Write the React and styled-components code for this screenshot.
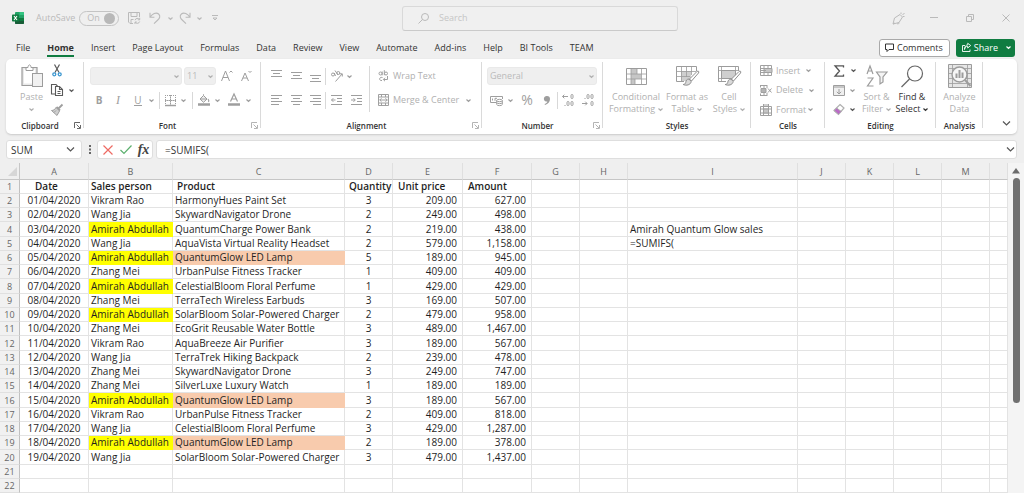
import React, { useState } from 'react';
import styled, { createGlobalStyle, css } from 'styled-components';

const GlobalStyle = createGlobalStyle`
    * {
        box-sizing: border-box;
    }

    body {
        margin: 0;
        background: #efefef;
        color: #333;
        font-family: "Open Sans", "Noto Sans", sans-serif;
        font-size: 9px;
        line-height: 12px;
    }

    button, input, select {
        margin: 0;
        padding: 0;
        border: 0;
        background: none;
        color: inherit;
        font: inherit;
    }
`

const Page = styled.div`
    display: flex;
    flex-direction: column;
    min-height: 100vh;
`

const Svg = styled.svg`
    display: block;
    flex: none;
    fill: none;
    stroke: currentColor;
    stroke-width: 1;
    overflow: visible;
`

const Solid = styled(Svg)`
    fill: currentColor;
    stroke: none;
`

/* ---- title bar ---- */

const TitleBar = styled.header`
    display: grid;
    grid-template-columns: minmax(0, 1fr) 276px 346px;
    align-items: center;
    height: 36px;
    color: #bababa;
`

const QuickAccess = styled.div`
    display: flex;
    align-items: center;
    padding-left: 12px;
`

const AutoSave = styled.label`
    display: flex;
    align-items: center;
    gap: 4px;
    margin: 0 7px 0 12px;
`

const Toggle = styled.span`
    display: flex;
    align-items: center;
    justify-content: space-between;
    width: 40px;
    height: 15px;
    padding: 0 3px 0 7px;
    border: 1px solid #c4c4c4;
    border-radius: 8px;
`

const ToggleInput = styled.input`
    appearance: none;
    width: 11px;
    height: 11px;
    border-radius: 50%;
    background: #b8b8b8;
`

const IconButton = styled.button`
    display: flex;
    align-items: center;
    justify-content: center;
    flex: none;
    width: ${props => props.$w || 14}px;
    height: 18px;
    color: ${props => props.$color || 'inherit'};
`

const Search = styled.label`
    display: flex;
    align-items: center;
    gap: 10px;
    height: 25px;
    padding: 0 15px;
    border: 1px solid #d9d9d9;
    border-bottom-color: #cacaca;
    border-radius: 3px;
    background: #f0f0f0;
`

const SearchInput = styled.input`
    flex: 1;
    min-width: 0;
    outline: none;

    &::placeholder {
        color: #c6c6c6;
        opacity: 1;
    }
`

const WindowButtons = styled.div`
    display: flex;
    justify-content: flex-end;
    gap: 22px;
    padding-right: 11px;
`

/* ---- tabs ---- */

const TabBar = styled.nav`
    display: flex;
    align-items: center;
    gap: 6px;
    height: 23px;
    padding: 0 9px 0 16px;
`

const Tabs = styled.div`
    display: flex;
    gap: 17px;
    flex: 1;
`

const Tab = styled.button`
    height: 18px;
    padding-top: 3px;
    white-space: nowrap;
    border-bottom: 2px solid ${props => props.$active ? '#107c41' : 'transparent'};
    font-weight: ${props => props.$active ? 700 : 400};
    color: #333;
`

const CommentsButton = styled.button`
    display: flex;
    align-items: center;
    gap: 3px;
    height: 18px;
    padding: 0 6px 0 5px;
    border: 1px solid #a9a9a9;
    border-radius: 3px;
    background: #fff;
`

const ShareSplit = styled.div`
    display: flex;
    align-items: center;
    gap: 5px;
    height: 18px;
    padding: 0 2px 0 6px;
    border-radius: 3px;
    background: #107c41;
    color: #fff;
`

const ShareButton = styled.button`
    display: flex;
    align-items: center;
    gap: 3px;
`

/* ---- ribbon ---- */

const Ribbon = styled.section`
    display: flex;
    height: 75px;
    margin: 0 7px 0 6px;
    border-radius: 5px;
    background: #fff;
    box-shadow: 0 1px 2px #c9c9c9;
    color: #b0b0b0;
`

const GroupBox = styled.div`
    display: flex;
    flex-direction: column;
    flex: none;
    width: ${props => props.$w}px;
    padding: 2px 0;
    background: linear-gradient(#dadada, #dadada) right 3px / 1px 66px no-repeat;
`

const GroupBody = styled.div`
    display: flex;
    flex: 1;
    padding-left: ${props => props.$pad || 0}px;
`

const GroupFooter = styled.div`
    display: flex;
    align-items: center;
    height: 13px;
    font-size: 8px;
    font-weight: 600;
    color: #333;
`

const GroupName = styled.span`
    flex: 1;
    text-align: center;
`

const Launcher = styled.button`
    display: flex;
    width: 10px;
    color: ${props => props.$dark ? '#666' : '#b4b4b4'};
`

const BigButton = styled.button`
    display: flex;
    flex-direction: column;
    align-items: center;
    justify-content: flex-start;
    gap: 3px;
    flex: none;
    width: ${props => props.$w}px;
    padding-top: 3px;
    white-space: nowrap;
    color: ${props => props.$dark ? '#333' : '#b0b0b0'};
`

const BigIcon = styled.span`
    display: flex;
    align-items: center;
    height: 24px;
    color: ${props => props.$dark ? '#666' : '#9c9c9c'};
`

const ButtonLine = styled.span`
    display: flex;
    align-items: center;
    justify-content: center;
    gap: 3px;
    min-height: 12px;
`

const Stack = styled.div`
    display: flex;
    flex-direction: column;
    padding-top: ${props => props.$top || 0}px;
`

const Row = styled.div`
    display: flex;
    align-items: center;
    height: ${props => props.$h || 24}px;
`

const TextButton = styled.button`
    display: flex;
    align-items: center;
    gap: 4px;
    white-space: nowrap;

    svg {
        color: #a0a0a0;
    }
`

const Rule = styled.span`
    flex: none;
    width: 1px;
    height: ${props => props.$h || 17}px;
    background: #d8d8d8;
    margin: ${props => props.$m || '0'};
`

const Picker = styled.label`
    position: relative;
    display: block;
    width: ${props => props.$w}px;
    height: 18px;
    margin-right: 2px;
`

const PickerSelect = styled.select`
    appearance: none;
    width: 100%;
    height: 100%;
    padding: 0 2px;
    border: 1px solid #e9e9e9;
    border-radius: 3px;
    background: #efefef;
    color: #bababa;
    opacity: 1;
`

const PickerArrow = styled.span`
    position: absolute;
    top: 8px;
    right: 3px;
    pointer-events: none;
`

const Letter = styled.span`
    font-size: ${props => props.$size || 10}px;
    ${props => props.$bold && css`font-weight: 700;`}
    ${props => props.$italic && css`font-family: "Liberation Serif", serif; font-style: italic;`}
    ${props => props.$underline && css`border-bottom: 1px solid currentColor; line-height: 10px;`}
`

const RibbonEnd = styled.div`
    display: flex;
    flex: 1;
    align-items: flex-end;
    justify-content: flex-end;
    padding: 0 6px 2px 0;
    color: #555;
`

/* ---- formula bar ---- */

const FormulaBar = styled.section`
    display: flex;
    margin: 6px 7px 4px 6px;
    height: 19px;
    font-size: 10px;
`

const FieldBox = styled.div`
    display: flex;
    align-items: center;
    border: 1px solid #dedede;
    border-radius: 3px;
    background: #fff;
    padding: 0 ${props => props.$pad || 4}px;
    ${props => props.$w ? css`width: ${props.$w}px;` : css`flex: 1;`}
`

const FormulaBox = styled(FieldBox)`
    margin-left: 3px;
    padding: 0 1px 0 8px;
    color: #555;
`

const FieldInput = styled.input`
    flex: 1;
    min-width: 0;
    color: #333;
    outline: none;
`

const Dots = styled.span`
    display: flex;
    align-items: center;
    justify-content: center;
    width: 15px;
    color: #666;
`

const Fx = styled.span`
    font: italic bold 14px "Liberation Serif", serif;
    color: #444;
`

/* ---- sheet ---- */

const Sheet = styled.main`
    display: flex;
    flex: 1;
`

const Grid = styled.table`
    flex: 1;
    width: 0;
    align-self: flex-start;
    table-layout: fixed;
    border-collapse: separate;
    border-spacing: 0;
    font-size: 10px;
    line-height: 13px;
    background: #fff;
    color: #1f1f1f;

    tbody tr {
        height: 14px;
    }

    tbody tr:nth-child(4n) {
        height: 15px;
    }
`

const ColHead = styled.th`
    height: 17px;
    padding: 0;
    border-right: 1px solid #dfdfdf;
    border-bottom: 1px solid #c6c6c6;
    background: #efefef;
    color: #666;
    font-size: 9px;
    font-weight: 400;
`

const Corner = styled(ColHead)`
    border-right-color: #c6c6c6;
    color: #d6d6d6;
`

const RowHead = styled.th`
    padding: 0;
    border-right: 1px solid #c0c0c0;
    border-bottom: 1px solid #e0e0e0;
    background: #f1f1f1;
    color: #666;
    font-size: 9px;
    font-weight: 400;
`

const Cell = styled.td`
    height: 14px;
    padding: 0 ${props => props.$align === 'right' ? 5 : 0}px 0 ${props => props.$indent || 0}px;
    border-right: 1px solid ${props => props.$fill || '#e3e3e3'};
    border-bottom: 1px solid ${props => props.$fill || '#e3e3e3'};
    background: ${props => props.$fill || '#fff'};
    text-align: ${props => props.$align || 'left'};
    font-weight: ${props => props.$bold ? 600 : 400};
    white-space: nowrap;
`

const ScrollTrack = styled.div`
    display: flex;
    flex-direction: column;
    align-items: center;
    width: 16px;
    padding-top: 5px;
    background: #f4f4f4;
    color: #6c6c6c;
`

const ScrollThumb = styled.div`
    flex: 5;
    width: 7px;
    margin-top: 4px;
    border-radius: 4px;
    background: #707070;
`

const ScrollRest = styled.div`
    flex: 2;
`

/* ---- icons ---- */

const Icon = ({ w = 12, h = 12, solid, children, ...rest }) => {
    const Base = solid ? Solid : Svg
    return <Base width={w} height={h} viewBox={`0 0 ${w} ${h}`} aria-hidden="true" {...rest}>{children}</Base>
}

const Chevron = () => <Icon w={5} h={3}><path d="M.5.5l2 2 2-2" strokeWidth="1.2" /></Icon>
const WideChevron = () => <Icon w={9} h={5}><path d="M1 .5L4.5 4 8 .5" strokeWidth="1.2" /></Icon>

const ExcelLogo = () => (
    <Icon solid>
        <rect x="3" y="0" width="9" height="12" rx="1" fill="#21a366" />
        <path d="M7.5 0H11a1 1 0 0 1 1 1v2H7.5z" fill="#33c481" />
        <path d="M3 6h9v5a1 1 0 0 1-1 1H4a1 1 0 0 1-1-1z" fill="#185c37" />
        <path d="M7.5 6H12v3H7.5z" fill="#107c41" />
        <rect x="0" y="2.5" width="7" height="7" rx=".8" fill="#107c41" />
        <path d="M2 4l3 4M5 4L2 8" stroke="#fff" strokeWidth="1.1" />
    </Icon>
)

const SaveIcon = () => (
    <Icon>
        <path d="M5 11.5H2L.5 10V.5h11V5M3 .5v4h6v-4M3 11V7.5h2.5M7 8.2a2.5 2.5 0 0 1 4.5-.7M11.7 5.8v2H9.8M11.7 9.5a2.5 2.5 0 0 1-4.5.7M7 12v-2h1.8" />
    </Icon>
)

const UndoIcon = () => <Icon><path d="M1 .8v4.4h4.4M1.2 5C3.3 2 7-.2 9.6 2c2.2 2 1 4.5-.8 6L5 11.7" strokeWidth="1.1" /></Icon>
const RedoIcon = () => <Icon><path d="M11 .8v4.4H6.6M10.8 5C8.7 2 5-.2 2.4 2c-2.2 2-1 4.5.8 6L7 11.7" strokeWidth="1.1" /></Icon>

const SearchIcon = () => (
    <Icon w={11} h={11}><circle cx="7" cy="4" r="3.5" /><path d="M4.5 6.5l-4 4" /></Icon>
)

const PenIcon = () => (
    <Icon w={13} h={13}><path d="M8 2.5L10.5 5 7 10.5 1 12l1.5-6zM1 12l2-1M9 2V.5M10.5 3l2-2M11 4.5h1.5M5 11.5c1 1 2.5 0 2-1" /></Icon>
)

const CommentIcon = () => (
    <Icon w={9} h={9}><path d="M.5 1h8v5.5H4l-2 2v-2H.5z" /></Icon>
)

const ShareIcon = () => (
    <Icon w={9} h={9}><path d="M3 2.5H.5v6H8v-2M2.5 6.5C3 4 4 3.3 5.7 3.2V5l3-2.5-3-2.2v1.5C4 2 2.5 3.5 2.5 6.5z" strokeWidth=".9" /></Icon>
)

const LauncherIcon = () => (
    <Icon w={7} h={7}><path d="M.5 6V.5H6M2.5 2.5L6 6M6.5 3v3.5H3" /></Icon>
)

const PasteIcon = () => (
    <Icon w={22} h={24}>
        <path d="M1 3.5h15v18H1z" fill="#e9e9e9" strokeWidth="1.2" />
        <path d="M3 5.5h11v14H3z" fill="#fff" stroke="none" />
        <path d="M5 6.5v-3h2c0-3.5 3-3.5 3 0h2v3z" fill="#fff" />
        <rect x="11.5" y="9.5" width="10" height="13" fill="#f1f1f1" />
    </Icon>
)

const CutIcon = () => (
    <Icon w={10} h={13}>
        <path d="M2.5.5L7 8.5M7.5.5L3 8.5" stroke="#5a5a5a" strokeWidth="1.2" />
        <circle cx="2.3" cy="10.3" r="1.5" stroke="#3a96d0" strokeWidth="1.3" />
        <circle cx="7.7" cy="10.3" r="1.5" stroke="#3a96d0" strokeWidth="1.3" />
    </Icon>
)

const CopyIcon = () => (
    <Icon>
        <path d="M4 10H.5V.5H5L6.5 2M4.5 2.5h4l3 3v6h-7zM8.5 2.5v3h3M6.5 7.5h3M6.5 9.5h3" strokeWidth="1.1" />
    </Icon>
)

const BrushIcon = () => (
    <Icon>
        <path d="M11.5.5l-4 4M5.5 3L9 6.5" strokeWidth="1.8" />
        <path d="M5 3.5L8.5 7 6 11.5l-5.5-5c2 0 3.5-1 4.5-3z" fill="#cfcfcf" />
        <path d="M3 8.5l2-2" />
    </Icon>
)

const BordersIcon = () => (
    <Icon w={11} h={11}>
        <path d="M.5 0v10M10.5 0v10M5.5 0v10M0 .5h11M0 5.5h11" strokeDasharray="1 1" />
        <path d="M0 10.5h11" strokeWidth="1.5" />
        <path d="M0 5.5h11M5.5 0v10" strokeWidth=".6" />
    </Icon>
)

const FillIcon = () => (
    <Icon>
        <path d="M5.5 1.5L9 5 5.5 8.3 2 5zM2.5 5h6M5.5 1.5V.3" fill="#eee" />
        <path d="M10 5c1 1.5 1 2.5.2 2.8" strokeWidth="1.2" />
        <path d="M0 10.5h12" strokeWidth="2.5" />
    </Icon>
)

const FontColorIcon = () => (
    <Icon>
        <path d="M2.5 7.5L6 0l3.5 7.5M4 5h4" strokeWidth="1.2" />
        <path d="M0 10.5h12" strokeWidth="2.5" />
    </Icon>
)

const Lines = ({ rows }) => (
    <Icon w={11} h={12}>
        {rows.map(([x1, x2, y]) => <path key={y} d={`M${x1} ${y}H${x2}`} />)}
    </Icon>
)

const top = [[0, 11, 0.5], [2, 9, 3.5], [0, 11, 6.5]]
const middle = [[0, 11, 2.5], [2, 9, 5.5], [0, 11, 8.5]]
const bottom = [[0, 11, 5.5], [2, 9, 8.5], [0, 11, 11.5]]
const left = [[0, 11, 1.5], [0, 8, 4.5], [0, 11, 7.5], [0, 8, 10.5]]
const center = [[0, 11, 1.5], [2, 9, 4.5], [0, 11, 7.5], [2, 9, 10.5]]
const right = [[0, 11, 1.5], [3, 11, 4.5], [0, 11, 7.5], [3, 11, 10.5]]

const OrientationIcon = () => (
    <Icon>
        <circle cx="2" cy="4.5" r="1.5" /><path d="M3.3 3l1.2 3M4 .5L7 5" />
        <circle cx="7.3" cy="3" r="1.5" />
        <path d="M4.5 11.5L11 4M8.5 3.8h2.8v2.7" />
    </Icon>
)

const IndentIcon = ({ flip }) => (
    <Icon w={11} h={12}>
        <path d="M0 1.5h11M6 4.5h5M6 7.5h5M0 10.5h11" />
        <path d={flip ? 'M0 6h4M2.5 4.2L4.3 6 2.5 7.8' : 'M.5 6h4M2.3 4.2L.5 6l1.8 1.8'} />
    </Icon>
)

const WrapIcon = () => (
    <Icon w={11} h={12}>
        <circle cx="2.5" cy="3.5" r="1.5" /><path d="M4.2 1.5v3.8M6.3.2v5" />
        <circle cx="8" cy="3.5" r="1.5" />
        <path d="M4.5 7.5c-3.5-1-4 3.5-.5 3M9.5 6v3.5h-4M7 7.8L5.3 9.5 7 11.2" />
    </Icon>
)

const MergeIcon = () => (
    <Icon w={11} h={12}>
        <path d="M.5.5h10v11H.5zM0 3h11M0 9h11M3.5 0v3M7.5 0v3M3.5 9v3M7.5 9v3M1.5 6h8M3.5 4.3L1.8 6l1.7 1.7M7.5 4.3L9.2 6 7.5 7.7" />
    </Icon>
)

const CurrencyIcon = () => (
    <Icon w={13} h={11}>
        <path d="M6 7.5H.5v-6h12V4M2.5 3.5v2M5 3.3h2M5 3.3v2.5" />
        <ellipse cx="9.5" cy="5.5" rx="2.8" ry="1.2" fill="#fff" />
        <path d="M6.7 5.5v4c0 1.5 5.6 1.5 5.6 0v-4M6.7 7.5c0 1.5 5.6 1.5 5.6 0" />
    </Icon>
)

const DecimalIcon = ({ less }) => (
    <Icon w={12} h={12}>
        <rect x="9" y=".5" width="2" height="4" rx="1" />
        <rect x="9" y="7.5" width="2" height="4" rx="1" />
        {less ? (
            <>
                <rect x="5" y=".5" width="2" height="4" rx="1" />
                <path d="M3 4v1M0 9.5h5M3.3 7.7l1.8 1.8-1.8 1.8" />
            </>
        ) : (
            <>
                <rect x="5" y="7.5" width="2" height="4" rx="1" />
                <path d="M3 11v1M.5 2.5H6M2.3.7L.5 2.5l1.8 1.8" />
            </>
        )}
    </Icon>
)

const ConditionalIcon = () => (
    <Icon w={21} h={17}>
        <path d="M5 1h6v5H5zM5 6h10v5H5zM5 11h4v5H5z" fill="#c6c6c6" stroke="none" />
        <path d="M.5.5h20v16H.5z" />
        <path d="M0 6h21M0 11h21M5 0v17M15.5 0v17M11 0v6M9 11v6" strokeWidth=".8" />
    </Icon>
)

const Paintbrush = () => (
    <>
        <path d="M21 5.5L13.5 13l2 2 7-8c1-1.5-.3-2.5-1.5-1.5z" fill="#fff" stroke="#8e8e8e" />
        <path d="M13 13c-2.5 0-3 2-3.3 3.5-.3 1.2-1.2 2-2.5 2 3 1.5 7.5.5 8-3z" fill="#d9d9d9" stroke="#8e8e8e" />
    </>
)

const FormatTableIcon = () => (
    <Icon w={22} h={20}>
        <path d="M5 5h10v10H5z" fill="#cfcfcf" stroke="none" />
        <path d="M8 15.5H.5V.5h20V5" />
        <path d="M0 5.5h20.5M0 10.5h14M5.5 0v15M10.5 0v11M15.5 0v9" strokeWidth=".8" />
        <Paintbrush />
    </Icon>
)

const CellStylesIcon = () => (
    <Icon w={22} h={20}>
        <path d="M3.5 4.5h14v8h-14z" fill="#cfcfcf" />
        <path d="M8 15.5H.5V.5h20V5" />
        <path d="M0 4.5h20M3.5 0v15.5M17.5 0v8M0 12.5h10" strokeWidth=".8" />
        <Paintbrush />
    </Icon>
)

const InsertIcon = () => (
    <Icon w={12} h={11}>
        <path d="M.5.5h11v10H.5zM0 3.5h12M0 7.5h12M4 0v3.5M8 0v3.5M4 7.5V11M8 7.5V11" />
        <path d="M4 3.5h8v4H4z" fill="#c6c6c6" /><path d="M0 5.5h6" />
    </Icon>
)

const DeleteIcon = () => (
    <Icon w={12} h={11}>
        <path d="M0 .5h7M0 10.5h7M.5 0v2.5M4 0v3M.5 8.5V11M4 8v3M7 0v3M7 8v3" />
        <path d="M1 3.5h5v4H1z" fill="#b4b4b4" /><path d="M8 3.5l3.5 4M11.5 3.5L8 7.5" />
    </Icon>
)

const FormatIcon = () => (
    <Icon>
        <path d="M.5 2.5h11v9H.5zM3.5 0v12M8.5 0v12M0 5h12M0 9h12M3.5 1h5" />
        <path d="M3.5 5h5v4h-5z" fill="#c6c6c6" />
    </Icon>
)

const SumIcon = () => <Icon w={11} h={12}><path d="M9.5 2.5V.8H1L5.5 6 1 11.2h8.5V9.5" strokeWidth="1.3" /></Icon>

const FillDownIcon = () => (
    <Icon w={12} h={11}><path d="M.5.5h11v10H.5z" fill="#efefef" /><path d="M0 2h12M6 4v5M3.8 6.8L6 9l2.2-2.2" /></Icon>
)

const EraserIcon = () => (
    <Icon w={12} h={11} stroke="#b055bd">
        <path d="M7 .5L11 4l-5.5 6.5-4.5-4z" fill="#fff" strokeWidth="1.2" />
        <path d="M3.7 4l4.6 3.5-2.8 3-4.5-4z" fill="#b96cc5" />
    </Icon>
)

const SortIcon = () => (
    <Icon w={22} h={22}>
        <path d="M1 9l3-8 3 8M2 6h4M1.5 13H7l-5.5 8h6" strokeWidth="1.2" />
        <path d="M10.5 7H21l-4 5v5l-3 2v-7z" strokeWidth="1.2" fill="#f4f4f4" />
    </Icon>
)

const FindIcon = () => (
    <Icon w={22} h={23}><circle cx="14" cy="8.5" r="7.5" strokeWidth="1.2" /><path d="M8.5 14l-8 8" strokeWidth="1.2" /></Icon>
)

const AnalyzeIcon = () => (
    <Icon w={24} h={24}>
        <path d="M.5.5h23v23H.5z" fill="#e6e6e6" />
        <path d="M0 4.5h24M0 9.5h24M0 14.5h24M0 19.5h24M4.5 0v24M19.5 0v24" strokeWidth=".8" />
        <circle cx="11.5" cy="10.5" r="7.5" fill="#f6f6f6" strokeWidth="1.4" />
        <path d="M8.5 14V9.5M11.5 14V6M14.5 14V8.5" strokeWidth="2" />
        <path d="M17 16l5.5 6" strokeWidth="2" />
    </Icon>
)

/* ---- data ---- */

const tabs = ['File', 'Home', 'Insert', 'Page Layout', 'Formulas', 'Data', 'Review', 'View', 'Automate', 'Add-ins', 'Help', 'BI Tools', 'TEAM']

const columns = [
    ['A', 69], ['B', 84], ['C', 172], ['D', 48], ['E', 70], ['F', 69], ['G', 48],
    ['H', 48], ['I', 170], ['J', 48], ['K', 48], ['L', 48], ['M', 48], ['', null]
]

const sales = [
    ['01/04/2020', 'Vikram Rao', 'HarmonyHues Paint Set', '3', '209.00', '627.00'],
    ['02/04/2020', 'Wang Jia', 'SkywardNavigator Drone', '2', '249.00', '498.00'],
    ['03/04/2020', 'Amirah Abdullah', 'QuantumCharge Power Bank', '2', '219.00', '438.00'],
    ['04/04/2020', 'Wang Jia', 'AquaVista Virtual Reality Headset', '2', '579.00', '1,158.00'],
    ['05/04/2020', 'Amirah Abdullah', 'QuantumGlow LED Lamp', '5', '189.00', '945.00'],
    ['06/04/2020', 'Zhang Mei', 'UrbanPulse Fitness Tracker', '1', '409.00', '409.00'],
    ['07/04/2020', 'Amirah Abdullah', 'CelestialBloom Floral Perfume', '1', '429.00', '429.00'],
    ['08/04/2020', 'Zhang Mei', 'TerraTech Wireless Earbuds', '3', '169.00', '507.00'],
    ['09/04/2020', 'Amirah Abdullah', 'SolarBloom Solar-Powered Charger', '2', '479.00', '958.00'],
    ['10/04/2020', 'Zhang Mei', 'EcoGrit Reusable Water Bottle', '3', '489.00', '1,467.00'],
    ['11/04/2020', 'Vikram Rao', 'AquaBreeze Air Purifier', '3', '189.00', '567.00'],
    ['12/04/2020', 'Wang Jia', 'TerraTrek Hiking Backpack', '2', '239.00', '478.00'],
    ['13/04/2020', 'Zhang Mei', 'SkywardNavigator Drone', '3', '249.00', '747.00'],
    ['14/04/2020', 'Zhang Mei', 'SilverLuxe Luxury Watch', '1', '189.00', '189.00'],
    ['15/04/2020', 'Amirah Abdullah', 'QuantumGlow LED Lamp', '3', '189.00', '567.00'],
    ['16/04/2020', 'Vikram Rao', 'UrbanPulse Fitness Tracker', '2', '409.00', '818.00'],
    ['17/04/2020', 'Wang Jia', 'CelestialBloom Floral Perfume', '3', '429.00', '1,287.00'],
    ['18/04/2020', 'Amirah Abdullah', 'QuantumGlow LED Lamp', '2', '189.00', '378.00'],
    ['19/04/2020', 'Wang Jia', 'SolarBloom Solar-Powered Charger', '3', '479.00', '1,437.00'],
    [],
    []
]

const headings = ['Date', 'Sales person', 'Product', 'Quantity', 'Unit price', 'Amount']
const headingIndent = [15, 2, 4, 4, 5, 5]
const aligns = ['center', 'left', 'left', 'center', 'right', 'right']

const fillFor = (value) => {
    if (value === 'Amirah Abdullah') return '#ffff00'
    if (value === 'QuantumGlow LED Lamp') return '#f8cbad'
    return undefined
}

const Group = ({ name, w, pad, launcher, dark, children }) => (
    <GroupBox $w={w}>
        <GroupBody $pad={pad}>{children}</GroupBody>
        <GroupFooter>
            <GroupName>{name}</GroupName>
            {launcher && <Launcher $dark={dark} aria-label={`${name} settings`}><LauncherIcon /></Launcher>}
        </GroupFooter>
    </GroupBox>
)

const Big = ({ w, icon, lines, arrow, dark }) => (
    <BigButton $w={w} $dark={dark}>
        <BigIcon $dark={dark}>{icon}</BigIcon>
        <span>
            {lines.map((line, i) => (
                <ButtonLine key={i}>{line}{arrow && i === lines.length - 1 && <Chevron />}</ButtonLine>
            ))}
        </span>
    </BigButton>
)

const Tool = ({ w, label, color, children }) => (
    <IconButton $w={w} $color={color} aria-label={label}>{children}</IconButton>
)

// ribbon tools are dimmed while a formula is being typed
const Dim = (props) => <Tool color="#9e9e9e" {...props} />

function App() {
    const [formula, setFormula] = useState('=SUMIFS(')
    const [name, setName] = useState('SUM')
    const [autoSave, setAutoSave] = useState(true)

    const extraCell = (row, col) => {
        if (col !== 'I') return null
        if (row === 4) return 'Amirah Quantum Glow sales'
        if (row === 5) return formula
        return null
    }

    return (
        <Page>
            <GlobalStyle />
            <TitleBar>
                <QuickAccess>
                    <ExcelLogo />
                    <AutoSave>
                        AutoSave
                        <Toggle>
                            On
                            <ToggleInput type="checkbox" checked={autoSave} onChange={() => setAutoSave(!autoSave)} />
                        </Toggle>
                    </AutoSave>
                    <Tool w={16} label="Save"><SaveIcon /></Tool>
                    <Tool w={26} label="Undo"><UndoIcon /></Tool>
                    <Tool w={5} label="Undo list"><Chevron /></Tool>
                    <Tool w={24} label="Redo"><RedoIcon /></Tool>
                    <Tool w={5} label="Redo list"><Chevron /></Tool>
                    <Tool w={26} label="Customize toolbar">
                        <Icon w={6} h={6}><path d="M0 .5h6M1 3l2 2 2-2z" /></Icon>
                    </Tool>
                </QuickAccess>
                <Search>
                    <SearchIcon />
                    <SearchInput type="search" placeholder="Search" />
                </Search>
                <WindowButtons>
                    <Tool label="Ink"><PenIcon /></Tool>
                    <Tool label="Minimize"><Icon w={8} h={8}><path d="M0 3.5h8" /></Icon></Tool>
                    <Tool label="Restore"><Icon w={8} h={8}><path d="M.5 2.5h5v5h-5zM2.5 2V.5h5v5H6" /></Icon></Tool>
                    <Tool label="Close"><Icon w={8} h={8}><path d="M.5.5l7 7M7.5.5l-7 7" /></Icon></Tool>
                </WindowButtons>
            </TitleBar>

            <TabBar>
                <Tabs>
                    {tabs.map(tab => <Tab key={tab} $active={tab === 'Home'}>{tab}</Tab>)}
                </Tabs>
                <CommentsButton><CommentIcon />Comments</CommentsButton>
                <ShareSplit>
                    <ShareButton><ShareIcon />Share</ShareButton>
                    <Tool w={10} label="Share options"><Chevron /></Tool>
                </ShareSplit>
            </TabBar>

            <Ribbon>
                <Group name="Clipboard" w={78} pad={8} launcher dark>
                    <BigButton $w={35}>
                        <BigIcon><PasteIcon /></BigIcon>
                        <span>
                            <ButtonLine>Paste</ButtonLine>
                            <ButtonLine><Chevron /></ButtonLine>
                        </span>
                    </BigButton>
                    <Stack>
                        <Row $h={19}><Tool w={16} label="Cut"><CutIcon /></Tool></Row>
                        <Row $h={20}>
                            <Tool w={16} label="Copy" color="#5a5a5a"><CopyIcon /></Tool>
                            <Tool w={12} label="Copy options" color="#5a5a5a"><Chevron /></Tool>
                        </Row>
                        <Row $h={19}><Dim w={16} label="Format painter"><BrushIcon /></Dim></Row>
                    </Stack>
                </Group>

                <Group name="Font" w={177} pad={6} launcher>
                    <Stack $top={3}>
                        <Row>
                            <Picker $w={92}>
                                <PickerSelect aria-label="Font" disabled><option></option></PickerSelect>
                                <PickerArrow><Chevron /></PickerArrow>
                            </Picker>
                            <Picker $w={32}>
                                <PickerSelect aria-label="Font size" disabled><option>11</option></PickerSelect>
                                <PickerArrow><Chevron /></PickerArrow>
                            </Picker>
                            <Dim w={18} label="Grow font">
                                <Icon><path d="M.5 11l4-10 4 10M2 7.5h5M8.5 2.5L10 1l1.5 1.5" /></Icon>
                            </Dim>
                            <Dim w={20} label="Shrink font">
                                <Icon w={11} h={12}><path d="M.5 11L4 3l3.5 8M2 8h4M7.5 1L9 2.5 10.5 1" /></Icon>
                            </Dim>
                        </Row>
                        <Row>
                            <Dim w={18} label="Bold"><Letter $bold>B</Letter></Dim>
                            <Dim w={20} label="Italic"><Letter $italic $size={12}>I</Letter></Dim>
                            <Dim w={20} label="Underline"><Letter $underline>U</Letter></Dim>
                            <Dim w={7} label="Underline options"><Chevron /></Dim>
                            <Rule $m="0 4px" />
                            <Dim w={13} label="Borders"><BordersIcon /></Dim>
                            <Dim w={13} label="Border options"><Chevron /></Dim>
                            <Rule $m="0 4px 0 2px" />
                            <Dim w={14} label="Fill colour"><FillIcon /></Dim>
                            <Dim w={13} label="Fill options"><Chevron /></Dim>
                            <Dim w={20} label="Font colour"><FontColorIcon /></Dim>
                            <Dim w={8} label="Font colour options"><Chevron /></Dim>
                        </Row>
                    </Stack>
                </Group>

                <Group name="Alignment" w={221} pad={5} launcher>
                    <Stack $top={3}>
                        <Row>
                            <Dim w={20} label="Top align"><Lines rows={top} /></Dim>
                            <Dim w={20} label="Middle align"><Lines rows={middle} /></Dim>
                            <Dim w={19} label="Bottom align"><Lines rows={bottom} /></Dim>
                            <Rule $m="0 3px 0 0" />
                            <Dim w={16} label="Orientation"><OrientationIcon /></Dim>
                            <Dim w={9} label="Orientation options"><Chevron /></Dim>
                        </Row>
                        <Row>
                            <Dim w={20} label="Align left"><Lines rows={left} /></Dim>
                            <Dim w={20} label="Center"><Lines rows={center} /></Dim>
                            <Dim w={19} label="Align right"><Lines rows={right} /></Dim>
                            <Rule />
                            <Dim w={20} label="Decrease indent"><IndentIcon /></Dim>
                            <Dim w={20} label="Increase indent"><IndentIcon flip /></Dim>
                        </Row>
                    </Stack>
                    <Rule $h={46} $m="5px 8px 0 3px" />
                    <Stack $top={3}>
                        <Row><TextButton><WrapIcon />Wrap Text</TextButton></Row>
                        <Row>
                            <TextButton><MergeIcon />Merge &amp; Center</TextButton>
                            <Dim w={18} label="Merge options"><Chevron /></Dim>
                        </Row>
                    </Stack>
                </Group>

                <Group name="Number" w={121} pad={5} launcher>
                    <Stack $top={3}>
                        <Row>
                            <Picker $w={110}>
                                <PickerSelect aria-label="Number format" disabled><option>General</option></PickerSelect>
                                <PickerArrow><Chevron /></PickerArrow>
                            </Picker>
                        </Row>
                        <Row>
                            <Dim w={18} label="Accounting format"><CurrencyIcon /></Dim>
                            <Dim w={10} label="Accounting options"><Chevron /></Dim>
                            <Dim w={24} label="Percent style"><Letter $size={14}>%</Letter></Dim>
                            <Dim w={16} label="Comma style">
                                <Icon solid w={6} h={9}><path d="M3 0a3 3 0 0 1 3 3c0 3-2 5-5 6L.6 8c1.900-.7 2.700-1.500 2.700-2.500A2.800 2.800 0 1 1 3 0z" /></Icon>
                            </Dim>
                            <Rule $m="0 0 0 2px" />
                            <Dim w={20} label="Increase decimal"><DecimalIcon /></Dim>
                            <Dim w={20} label="Decrease decimal"><DecimalIcon less /></Dim>
                        </Row>
                    </Stack>
                </Group>

                <Group name="Styles" w={148} pad={6}>
                    <Big w={54} icon={<ConditionalIcon />} lines={['Conditional', 'Formatting']} arrow />
                    <Big w={48} icon={<FormatTableIcon />} lines={['Format as', 'Table']} arrow />
                    <Big w={36} icon={<CellStylesIcon />} lines={['Cell', 'Styles']} arrow />
                </Group>

                <Group name="Cells" w={74} pad={9}>
                    <Stack>
                        <Row $h={19}><TextButton><InsertIcon />Insert</TextButton><Dim w={17} label="Insert options"><Chevron /></Dim></Row>
                        <Row $h={20}><TextButton><DeleteIcon />Delete</TextButton><Dim w={17} label="Delete options"><Chevron /></Dim></Row>
                        <Row $h={19}><TextButton><FormatIcon />Format</TextButton><Dim w={9} label="Format options"><Chevron /></Dim></Row>
                    </Stack>
                </Group>

                <Group name="Editing" w={111} pad={6}>
                    <Stack>
                        <Row $h={19}><Tool w={16} label="AutoSum" color="#555"><SumIcon /></Tool><Tool w={12} label="AutoSum options" color="#555"><Chevron /></Tool></Row>
                        <Row $h={20}><Dim w={16} label="Fill"><FillDownIcon /></Dim><Dim w={11} label="Fill options"><Chevron /></Dim></Row>
                        <Row $h={19}><Tool w={16} label="Clear"><EraserIcon /></Tool><Tool w={11} label="Clear options" color="#555"><Chevron /></Tool></Row>
                    </Stack>
                    <Big w={35} icon={<SortIcon />} lines={['Sort &', 'Filter']} arrow />
                    <Big w={36} icon={<FindIcon />} lines={['Find &', 'Select']} arrow dark />
                </Group>

                <Group name="Analysis" w={47}>
                    <Big w={47} icon={<AnalyzeIcon />} lines={['Analyze', 'Data']} />
                </Group>

                <RibbonEnd>
                    <Tool w={9} label="Collapse ribbon"><WideChevron /></Tool>
                </RibbonEnd>
            </Ribbon>

            <FormulaBar>
                <FieldBox $w={76}>
                    <FieldInput aria-label="Name box" value={name} onChange={(e) => setName(e.target.value)} />
                    <Tool w={13} label="Names" color="#555"><WideChevron /></Tool>
                </FieldBox>
                <Dots>
                    <Icon solid w={2} h={9}><path d="M0 0h2v2H0zM0 3.5h2v2H0zM0 7h2v2H0z" /></Icon>
                </Dots>
                <FieldBox $w={56} $pad={1}>
                    <Tool w={18} label="Cancel" color="#ee6a63"><Icon w={10} h={10}><path d="M.5.5l9 9M9.5.5l-9 9" strokeWidth="1.2" /></Icon></Tool>
                    <Tool w={18} label="Enter" color="#5cb06e"><Icon w={12} h={9}><path d="M.5 5L4 8.5l7.5-8" strokeWidth="1.2" /></Icon></Tool>
                    <Tool w={17} label="Insert function"><Fx>fx</Fx></Tool>
                </FieldBox>
                <FormulaBox>
                    <FieldInput aria-label="Formula" value={formula} onChange={(e) => setFormula(e.target.value)} />
                    <Tool w={9} label="Expand formula bar"><WideChevron /></Tool>
                </FormulaBox>
            </FormulaBar>

            <Sheet>
                <Grid>
                    <colgroup>
                        <col width="20" />
                        {columns.map(([letter, w]) => <col key={letter} width={w || undefined} />)}
                    </colgroup>
                    <thead>
                        <tr>
                            <Corner><Icon solid w={18} h={12}><path d="M17 2v9H8z" /></Icon></Corner>
                            {columns.map(([letter]) => <ColHead key={letter}>{letter}</ColHead>)}
                        </tr>
                    </thead>
                    <tbody>
                        <tr>
                            <RowHead>1</RowHead>
                            {columns.map(([letter], i) => (
                                <Cell key={letter} $bold $indent={headingIndent[i]}>{headings[i]}</Cell>
                            ))}
                        </tr>
                        {sales.map((sale, r) => (
                            <tr key={r}>
                                <RowHead>{r + 2}</RowHead>
                                {columns.map(([letter], i) => (
                                    <Cell key={letter} $align={aligns[i]} $indent={aligns[i] === 'center' ? 0 : 2} $fill={fillFor(sale[i])}>
                                        {sale[i] || extraCell(r + 2, letter)}
                                    </Cell>
                                ))}
                            </tr>
                        ))}
                    </tbody>
                </Grid>
                <ScrollTrack>
                    <Icon solid w={8} h={6}><path d="M4 0l4 5.5H0z" /></Icon>
                    <ScrollThumb />
                    <ScrollRest />
                </ScrollTrack>
            </Sheet>
        </Page>
    )
}

export default App;
